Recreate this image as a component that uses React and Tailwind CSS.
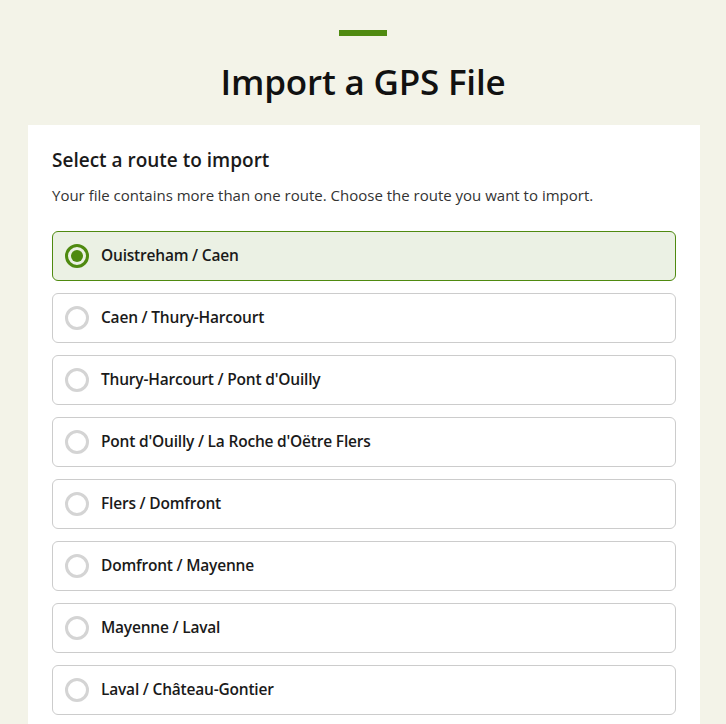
import React, { useState } from "react";

const routes = [
    "Ouistreham / Caen",
    "Caen / Thury-Harcourt",
    "Thury-Harcourt / Pont d'Ouilly",
    "Pont d'Ouilly / La Roche d'Oëtre Flers",
    "Flers / Domfront",
    "Domfront / Mayenne",
    "Mayenne / Laval",
    "Laval / Château-Gontier",
];

export default function App() {
    const [selected, setSelected] = useState(0);

    return (
        <div className="min-h-screen bg-[#f3f3e8] pt-[30px] font-['Open_Sans',sans-serif] text-[#1a1a1a]">
            <div className="mx-auto h-[6px] w-12 bg-[#4f8a10]" />
            <h1 className="mt-[22px] text-center text-[35px] font-semibold leading-[48px] tracking-[-0.2px] text-[#111]">
                Import a GPS File
            </h1>
            <div className="ml-[28px] mr-[26px] mt-[19px] bg-white px-6 pt-[22px] pb-6">
                <h2 className="text-[19px] font-semibold leading-[26px]">Select a route to import</h2>
                <p className="mt-[11px] text-[15px] leading-[22px] text-[#333]">
                    Your file contains more than one route. Choose the route you want to import.
                </p>
                <div className="mt-[25px] flex flex-col gap-3">
                    {routes.map((route, i) => {
                        const active = i === selected;
                        return (
                            <label
                                key={route}
                                onClick={() => setSelected(i)}
                                className={`flex h-[50px] cursor-pointer items-center gap-3 rounded-md border px-3 ${
                                    active ? "border-[#4f8a10] bg-[#ebf1e4]" : "border-[#cccccc] bg-white"
                                }`}
                            >
                                <span
                                    className={`flex h-[24px] w-[24px] items-center justify-center rounded-full border-[3px] ${
                                        active ? "border-[#4f8a10]" : "border-[#d4d4d4]"
                                    }`}
                                >
                                    {active && <span className="h-[12px] w-[12px] rounded-full bg-[#4f8a10]" />}
                                </span>
                                <span className="text-[15.5px] font-semibold tracking-[-0.2px]">{route}</span>
                            </label>
                        );
                    })}
                </div>
            </div>
        </div>
    );
}
